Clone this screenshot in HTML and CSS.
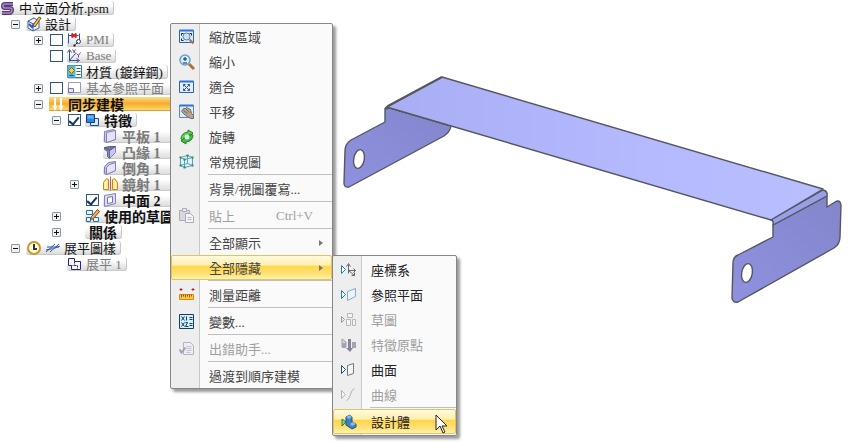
FILE: index.html
```
<!DOCTYPE html>
<html lang="zh-Hant">
<head>
    <meta charset="UTF-8">
    <meta name="viewport" content="width=device-width, initial-scale=1.0">
    <title>中立面分析.psm</title>
    <link rel="stylesheet" href="styles.css">
</head>
<body>
<div class="workspace">

    <!-- Feature tree -->
    <ul class="tree">
        <li class="row root">
            <span class="node"><svg class="icon" viewBox="0 0 16 16"><path d="M13 4H5Q3 4 3 6T5 8H10Q12 8 12 10T10 13H2" fill="none" stroke="#5b3a78" stroke-width="4"/><path d="M13 4H5Q3 4 3 6T5 8H10Q12 8 12 10T10 13H2" fill="none" stroke="#a58cc0" stroke-width="1.5"/></svg>中立面分析.psm</span>
        </li>
        <li class="row level1">
            <span class="slot"><button class="toggle minus" aria-label="設計"></button></span>
            <span class="node"><svg class="icon" viewBox="0 0 16 16"><path d="M2 5l6-3 5 3v7l-6 3-5-3z" fill="#eef3fa" stroke="#35609c"/><path d="M2 5l5 3 6-3M7 8v7" fill="none" stroke="#35609c"/><path d="M3 8l3 3 6-7" fill="none" stroke="#2a55c8" stroke-width="2"/><path d="M7 9l6-8 2 1-6 9z" fill="#f0c060" stroke="#7a4b18"/></svg>設計</span>
        </li>
        <li class="row level2">
            <span class="slot"><button class="toggle plus" aria-label="PMI"></button></span>
            <span class="slot"><input type="checkbox" class="check" aria-label="PMI"></span>
            <span class="node dim"><svg class="icon" viewBox="0.5 0.5 16 16"><path d="M2 2v10M2 4h10M13 2v8" fill="none" stroke="#2f4fb0"/><path d="M5 2l5 4M10 2L5 6" stroke="#e02020" stroke-width="2"/><circle cx="12" cy="10" r="2" fill="#fff" stroke="#26348c"/><path d="M7 13h2v2H7z" fill="#111"/><path d="M9 13l2-2" stroke="#111"/></svg>PMI</span>
        </li>
        <li class="row level2">
            <span class="slot"></span>
            <span class="slot"><input type="checkbox" class="check" aria-label="Base"></span>
            <span class="node dim"><svg class="icon" viewBox="0.5 0.5 16 16"><path d="M3 14V3M1 5l2-3 2 3M3 13h9M10 11l3 2-3 2M3 13l6-7" fill="none" stroke="#2f4f94"/><path d="M6 2l3 4M9 2L7 5M10 6l2 2 2-3M12 8v2" fill="none" stroke="#8b3a9c"/></svg>Base</span>
        </li>
        <li class="row level2">
            <span class="slot"></span>
            <span class="slot"></span>
            <span class="node"><svg class="icon" viewBox="0.5 0.5 16 16"><path d="M1 2h14v12H1z" fill="#fff" stroke="#2a7db0"/><path d="M1 2h8v12H1z" fill="#59b6dc"/><path d="M2 7l3-3 3 3-3 3z" fill="#f5d33d" stroke="#8a6a10"/><path d="M10 5h4M10 8h4M10 11h4" stroke="#2a5a80"/><path d="M3 12h4" stroke="#145888"/></svg>材質 (鍍鋅鋼)</span>
        </li>
        <li class="row level2">
            <span class="slot"><button class="toggle plus" aria-label="基本參照平面"></button></span>
            <span class="slot"><input type="checkbox" class="check" aria-label="基本參照平面"></span>
            <span class="node dim wide"><svg class="icon" viewBox="0.5 0.5 16 16"><path d="M2 3h12v10H2z" fill="#fff" stroke="#9a9ac8"/><path d="M2 9h5v4H2z" fill="#e2e2f5" stroke="#7070b0"/></svg>基本參照平面</span>
        </li>
        <li class="row level2">
            <span class="slot"><button class="toggle minus" aria-label="同步建模"></button></span>
            <span class="node strong active wide"><svg class="icon" viewBox="0 0 16 16"><path d="M6 2v9M12 2v9" stroke="#fff" stroke-width="2"/><path d="M3 9l3 2 3-2-3 6zM9 9l3 2 3-2-3 6z" fill="#fff"/></svg>同步建模</span>
        </li>
        <li class="row level3">
            <span class="slot"><button class="toggle minus" aria-label="特徵"></button></span>
            <span class="slot"><input type="checkbox" class="check" aria-label="特徵" checked></span>
            <span class="node strong"><svg class="icon" viewBox="0.5 0.5 16 16"><path d="M6 7h8v7H6z" fill="#d4ecfa" stroke="#24478c"/><path d="M2 3h8v8H2z" fill="#2f86e0" stroke="#123f96"/><path d="M3 4h6v3H3z" fill="#69b5f4"/></svg>特徵</span>
        </li>
        <li class="row level4">
            <span class="slot"></span>
            <span class="slot"></span>
            <span class="node strong dim wide"><svg class="icon" viewBox="0.5 0.5 16 16"><path d="M2 4l9-2 2 1v9l-9 3-2-1z" fill="#cbc8ee" stroke="#8480bd"/><path d="M4 5l9-2v9l-9 3z" fill="#e5e3fa" stroke="#8480bd"/></svg>平板 1</span>
        </li>
        <li class="row level4">
            <span class="slot"></span>
            <span class="slot"></span>
            <span class="node strong dim wide"><svg class="icon" viewBox="0.5 0.5 16 16"><path d="M7 7l6-4v6l-6 6z" fill="#c9c6ef" stroke="#8480bd"/><path d="M2 4l5 3v8l-2-2V8L2 6z" fill="#8a87bd" stroke="#66638f"/><path d="M2 4l5-1 6 0-6 4z" fill="#77749f" stroke="#5c5a84"/></svg>凸緣 1</span>
        </li>
        <li class="row level4">
            <span class="slot"></span>
            <span class="slot"></span>
            <span class="node strong dim wide"><svg class="icon" viewBox="0.5 0.5 16 16"><path d="M2 7l4-4 7-1v9l-9 4-2-1z" fill="#c3c0e8" stroke="#8480bd"/><path d="M4 8l3-3 6-2v8l-9 4z" fill="#e5e3fa" stroke="#8480bd"/></svg>倒角 1</span>
        </li>
        <li class="row level4">
            <span class="slot"><button class="toggle plus" aria-label="鏡射 1"></button></span>
            <span class="slot"></span>
            <span class="node strong dim wide"><svg class="icon" viewBox="0.5 0.5 16 16"><path d="M1 14V7l3-4 2 1v10zM15 14V7l-3-4-2 1v10z" fill="#ffe992" stroke="#bd8d17"/><path d="M8 1v14" stroke="#e0506a"/><path d="M3 13V7M13 13V7" stroke="#fffbd6"/></svg>鏡射 1</span>
        </li>
        <li class="row level4">
            <span class="slot"></span>
            <span class="slot"><input type="checkbox" class="check" aria-label="中面 2" checked></span>
            <span class="node strong wide"><svg class="icon" viewBox="0.5 0.5 16 16"><path d="M2 4l11-2v10L2 15z" fill="#dedcf5" stroke="#8480bd"/><path d="M5 6l5-1v6l-5 1z" fill="#fff" stroke="#7672b5"/></svg>中面 2</span>
        </li>
        <li class="row level3">
            <span class="slot"><button class="toggle plus" aria-label="使用的草圖"></button></span>
            <span class="slot"></span>
            <span class="node strong wide"><svg class="icon" viewBox="0.5 0.5 16 16"><path d="M2 3h6v4H2zM2 10h4v4H2zM9 10h5v4H9z" fill="#e8f5fd" stroke="#1a72b0"/><path d="M7 9l6-7 2 2-6 7-3 1z" fill="#f3b55a" stroke="#8a3b1a"/></svg>使用的草圖</span>
        </li>
        <li class="row level3">
            <span class="slot"><button class="toggle plus" aria-label="關係"></button></span>
            <span class="slot"></span>
            <span class="node strong plain">關係</span>
        </li>
        <li class="row level1">
            <span class="slot"><button class="toggle minus" aria-label="展平圖樣"></button></span>
            <span class="node"><svg class="icon" viewBox="0 0 16 16"><circle cx="8" cy="8" r="6" fill="#fffce8" stroke="#c89a28" stroke-width="2"/><path d="M8 4v5h3" fill="none" stroke="#3a3420" stroke-width="2"/></svg><svg class="icon" viewBox="0 0 16 16"><path d="M1 12L10 4M5 12l9-8M1 10l5-1 4-1 5-2M2 7h12" fill="none" stroke="#2e56a8"/><path d="M6 8l4-1-3 3z" fill="#6d9be0"/></svg>展平圖樣</span>
        </li>
        <li class="row level2">
            <span class="slot"></span>
            <span class="slot"></span>
            <span class="node dim"><svg class="icon" viewBox="0.5 0.5 16 16"><path d="M2 3h6v3h6v8H5v-4H2z" fill="#f7f7ff" stroke="#25258a"/><path d="M8 6v4H5M8 10h3v4" fill="none" stroke="#25258a" stroke-dasharray="2 1"/></svg>展平 1</span>
        </li>
    </ul>

    <!-- Model view -->
    <svg class="model" viewBox="330 0 520 442" role="img" aria-label="設計體">
        <defs>
            <linearGradient id="plate" x1="0" x2="1">
                <stop offset="0" stop-color="#a9adf4"/>
                <stop offset="0.6" stop-color="#b5baff"/>
                <stop offset="1" stop-color="#b9beff"/>
            </linearGradient>
            <linearGradient id="flange" x1="1" x2="0" y2="1">
                <stop offset="0" stop-color="#8386cb"/>
                <stop offset="1" stop-color="#8f91e0"/>
            </linearGradient>
        </defs>
        <g stroke="#55575e" stroke-width="1.4" stroke-linejoin="round">
            <path d="M390 108L385 109V122L351 140Q345 144 345 151L344 183Q344 188 349 187L444 136Q450 132 451 126Z" fill="url(#flange)"/>
            <path d="M387 107L442 77L823 189L771 220L390 108Z" fill="url(#plate)"/>
            <path d="M385 109L388 106L442 77" fill="none" stroke-width="2"/>
            <path d="M773 225L827 196V207L835 202Q840 199 841 205L840 237Q840 244 834 248L738 302Q733 303 732 298L733 263Q733 257 738 255L773 237Z" fill="url(#flange)"/>
            <path d="M771 220L823 190Q828 191 827 196L773 225Q774 221 771 220Z" fill="#9a9de8"/>
            <ellipse cx="359" cy="159" rx="5.3" ry="9.5" transform="rotate(10 359 159)" fill="#fff"/>
            <ellipse cx="747" cy="273" rx="5.3" ry="9.5" transform="rotate(10 747 273)" fill="#fff"/>
        </g>
    </svg>

    <!-- Context menu -->
    <ul class="menu context">
        <li><button class="item"><svg class="icon" viewBox="0.5 0.5 16 16"><path d="M1 2h14v12H1z" fill="#dcecfa" stroke="#2a62b4"/><path d="M1 2h14" stroke="#2d74d4" stroke-width="2"/><path d="M3 7V5h2M11 5h2v2M3 10v2h2" fill="none" stroke="#222"/><circle cx="8" cy="8" r="3.5" fill="#c2e4fa" stroke="#5c7ea8"/><path d="M11 11l4 4" stroke="#b0703e" stroke-width="2"/></svg>縮放區域</button></li>
        <li><button class="item"><svg class="icon" viewBox="0 0 16 16"><circle cx="6" cy="6" r="5" fill="#d0effc" stroke="#6d9ed0" stroke-width="1.5"/><path d="M4 5h4M6 3v4M4 9h4" stroke="#223"/><path d="M10 10l5 5" stroke="#b0703e" stroke-width="3"/></svg>縮小</button></li>
        <li><button class="item"><svg class="icon" viewBox="0.5 0.5 16 16"><path d="M1 3h14v11H1z" fill="#e4effb" stroke="#2a62b4"/><path d="M1 3h14" stroke="#2d74d4" stroke-width="2"/><path d="M5 6l6 6M11 6l-6 6" stroke="#2857c0"/><path d="M5 8V6h2M9 6h2v2M11 10v2H9M7 12H5v-2" fill="none" stroke="#2857c0"/></svg>適合</button></li>
        <li><button class="item"><svg class="icon" viewBox="0.5 0.5 16 16"><path d="M1 2h14v12H1z" fill="#dcecfa" stroke="#5c86bc"/><path d="M1 2h14" stroke="#2d74d4" stroke-width="2"/><path d="M3 8l2-3 2 0 1-1 2 1 2 1 1 4 2 2v3h-3l-3-2-2-1z" fill="#b3a596" stroke="#76695e"/><path d="M5 7l4 3M7 5l4 4" stroke="#76695e"/></svg>平移</button></li>
        <li><button class="item"><svg class="icon" viewBox="0 0 16 16"><path d="M2 10Q2 4 9 3V1l5 3-4 4V6Q5 7 5 11z" fill="#62d044" stroke="#268526"/><path d="M14 6q0 6-7 7v2l-5-3 4-4v2q5-1 5-5z" fill="#46b838" stroke="#268526"/><circle cx="8" cy="8" r="2.5" fill="#d5f0fc"/></svg>旋轉</button></li>
        <li><button class="item"><svg class="icon" viewBox="0.5 0.5 16 16"><path d="M2 4l4 2v8l-4-2zM6 6l8-2v8l-8 2M2 4l7-2 5 2M9 2v8M2 12l7-2 5 2" fill="#d5f4fa" fill-opacity=".6" stroke="#5aa0c4"/><path d="M1 3h2v2H1zM5 5h2v2H5zM13 3h2v2h-2zM8 1h2v2H8zM1 11h2v2H1zM5 13h2v2H5zM13 11h2v2h-2z" fill="#299044"/></svg>常規視圖</button></li>
        <li class="line"></li>
        <li><button class="item">背景/視圖覆寫...</button></li>
        <li class="line"></li>
        <li><button class="item" disabled><svg class="icon" viewBox="0.5 0.5 16 16"><path d="M1 3h10v10H1z" fill="#d8d8df" stroke="#aaaab8"/><path d="M4 1h4v3H4z" fill="#eee" stroke="#aaaab8"/><path d="M7 6h5l3 3v6H7z" fill="#f5f5f9" stroke="#aaaab8"/><path d="M9 10h4M9 12h4" stroke="#b7b7c4"/></svg>貼上<kbd class="shortcut">Ctrl+V</kbd></button></li>
        <li class="line"></li>
        <li><button class="item more">全部顯示</button></li>
        <li class="parent"><button class="item more selected">全部隱藏</button>
            <ul class="menu submenu">
                <li><button class="item"><svg class="icon" viewBox="0.5 0.5 16 16"><path d="M1 4l4 4-4 4z" fill="#fff" stroke="#1b7fc0"/><path d="M8 12V3M6 5l2-3 2 3M8 9h7M13 7l2 2-2 2M8 9l6 5M11 14h3v-3" fill="none" stroke="#666"/></svg>座標系</button></li>
                <li><button class="item"><svg class="icon" viewBox="0.5 0.5 16 16"><path d="M1 4l4 4-4 4z" fill="#fff" stroke="#1b7fc0"/><path d="M7 5l8-3v8l-8 4z" fill="#eaf3fa" stroke="#8babc5"/></svg>參照平面</button></li>
                <li><button class="item" disabled><svg class="icon" viewBox="0.5 0.5 16 16"><path d="M1 5l3 3-3 3z" fill="#eee" stroke="#999"/><path d="M7 2h5v4H7zM6 8h4v6H6zM12 8h3v6h-3z" fill="#f5f5f7" stroke="#b5b5bf"/></svg>草圖</button></li>
                <li><button class="item" disabled><svg class="icon" viewBox="0 0 16 16"><path d="M1 2l4 3v5H1z" fill="#d6d6e0" stroke="#9999ab"/><path d="M1 6h4v5H1zM11 5h4v6h-4z" fill="#a3a3b1"/><path d="M7 2h3v9h2l-3 4-4-4h2z" fill="#85859a"/></svg>特徵原點</button></li>
                <li><button class="item"><svg class="icon" viewBox="0.5 0.5 16 16"><path d="M1 4l4 4-4 4z" fill="#fff" stroke="#234c7c"/><path d="M7 4l6-2v10l-6 2z" fill="#f6f6f6" stroke="#777"/></svg>曲面</button></li>
                <li><button class="item" disabled><svg class="icon" viewBox="0.5 0.5 16 16"><path d="M1 4l4 4-4 4z" fill="#f5f5f5" stroke="#b0b0bb"/><path d="M6 14q3-1 4-6t4-6" fill="none" stroke="#b0b0bb"/></svg>曲線</button></li>
                <li class="line"></li>
                <li><button class="item selected"><svg class="icon" viewBox="0 0 16 16"><path d="M1 5l4 3-4 4z" fill="#8ad08a" stroke="#287d43"/><path d="M5 3l4-2 2 2v5l4 2v3l-4 2-6-4z" fill="#3f80c0" stroke="#245182"/><path d="M5 3l4-2 2 2-3 2zM9 10l3-2 3 2-4 2z" fill="#87bce8"/></svg>設計體</button>
                    <svg class="pointer" viewBox="0 0 13 20"><path d="M1 1v15l4-4 3 7 2-1-3-6h5z" fill="#fff" stroke="#222"/></svg>
                </li>
            </ul>
        </li>
        <li class="line"></li>
        <li><button class="item"><svg class="icon" viewBox="0.5 0.5 16 16"><path d="M1 8h14v5H1z" fill="#ffc848" stroke="#d58a18"/><path d="M3 8v3M5 8v2M7 8v3M9 8v2M11 8v3M13 8v2" stroke="#9a5b10"/><path d="M1 3h3M2.500 1.500v3M13 3h3M14.500 1.500v3" stroke="#cc2020"/></svg>測量距離</button></li>
        <li class="line"></li>
        <li><button class="item"><svg class="icon" viewBox="0.5 0.5 16 16"><path d="M1 1h14v14H1z" fill="#d0effa" stroke="#163d62"/><path d="M3 3l3 4M6 3L3 7M3 9l3 4M6 9l-3 4M8 3v4M7 9h2l-2 4h3M11 4h3M11 6h3M11 10h3M11 12h3" fill="none" stroke="#143a5c"/></svg>變數...</button></li>
        <li class="line"></li>
        <li><button class="item" disabled><svg class="icon" viewBox="0.5 0.5 16 16"><path d="M5 2h7l3 3v9H5z" fill="#ededf3" stroke="#b3b3c8"/><path d="M8 6h5M8 8h5M8 10h5M8 12h4" stroke="#c4c4d2"/><path d="M1 9l2 3 4-5" fill="none" stroke="#a1a1b4" stroke-width="2"/></svg>出錯助手...</button></li>
        <li class="line"></li>
        <li><button class="item">過渡到順序建模</button></li>
    </ul>
</div>
</body>
</html>
```

FILE: styles.css
```
* {
    box-sizing: border-box;
}
body {
    margin: 0;
    background-color: #fff;
    color: #111;
    font-family: "Liberation Serif", "Noto Sans CJK TC", serif;
    font-size: 13px;
}
ul {
    list-style: none;
    margin: 0;
    padding: 0;
}
button {
    font: inherit;
    padding: 0;
}
.icon {
    width: 16px;
    height: 16px;
    flex: none;
}
.workspace {
    position: relative;
    display: grid;
    grid-template-columns: 330px 1fr;
    align-items: start;
}
.model {
    display: block;
    width: 100%;
}

/* tree */
.row {
    display: flex;
    align-items: center;
    height: 16px;
    white-space: nowrap;
}
.level1 {
    padding-left: 6px;
}
.level2 {
    padding-left: 29px;
}
.level3 {
    padding-left: 47px;
}
.level4 {
    padding-left: 65px;
}
.slot {
    display: flex;
    align-items: center;
    justify-content: center;
    width: 18px;
    flex: none;
}
.toggle {
    width: 9px;
    height: 9px;
    border: 1px solid #8597ab;
    border-radius: 1px;
    background: linear-gradient(#111, #111) center / 5px 1px no-repeat, #f3f2ee;
}
.toggle.plus {
    background: linear-gradient(#111, #111) center / 5px 1px no-repeat, linear-gradient(#111, #111) center / 1px 5px no-repeat, #f3f2ee;
}
.check {
    appearance: none;
    width: 13px;
    height: 12px;
    margin: 0;
    border: 1px solid #2d5880;
    background-color: #fff;
    display: flex;
    justify-content: center;
}
.check:checked::before {
    content: "";
    width: 4px;
    height: 8px;
    border: solid #16365c;
    border-width: 0 2px 2px 0;
    transform: rotate(40deg);
}
.node {
    display: flex;
    align-items: center;
    gap: 3px;
    height: 14px;
    margin-left: 2px;
    padding-right: 4px;
    border-right: 1px solid #c9c9c9;
    border-bottom: 1px solid #c9c9c9;
    border-radius: 3px;
    background: linear-gradient(#fff 20%, #dcdcdc);
}
.root .node {
    margin-left: 0;
}
.dim {
    color: #7b7b7b;
}
.strong {
    font-size: 14px;
    font-weight: bold;
}
.plain {
    padding-left: 4px;
}
.wide {
    flex: 1;
}
.active {
    border-color: #d9a038;
    border-radius: 0;
    background: linear-gradient(#fcdc8c, #f6ac2c 50%, #fcd66c);
}

/* menus */
.menu {
    position: absolute;
    border: 1px solid #868686;
    border-radius: 2px;
    background: linear-gradient(90deg, #eee 28px, #c9c9c9 28px, #c9c9c9 29px, #fafafa 29px);
    box-shadow: 3px 3px 3px rgba(0, 0, 0, 0.4);
}
.context {
    left: 170px;
    top: 23px;
    width: 163px;
}
.parent {
    position: relative;
}
.submenu {
    left: 100%;
    top: 0;
    width: 125px;
    padding: 1px 0;
    z-index: 1;
}
.item {
    display: flex;
    align-items: center;
    gap: 14px;
    width: 100%;
    height: 25px;
    padding: 0 8px 0 7px;
    border: 1px solid transparent;
    border-radius: 2px;
    background: none;
    color: #444;
    text-align: left;
    white-space: nowrap;
}
.item:not(:has(.icon)) {
    padding-left: 37px;
}
.submenu .item {
    color: #222;
}
.item:disabled,
.submenu .item:disabled {
    color: #a0a0a0;
}
.shortcut {
    margin: 0 10px 0 auto;
    font: inherit;
}
.more {
    justify-content: space-between;
}
.more::after {
    content: "";
    border: solid transparent;
    border-width: 3px 0 3px 4px;
    border-left-color: #777;
}
.item.selected {
    border-color: #e2c45c;
    background: linear-gradient(#fffbe0, #ffeeac 40%, #ffd54c 45%, #ffe27a 80%, #fff2b4);
}
.line {
    height: 2px;
    margin-left: 37px;
    border-top: 1px solid #c0c0c0;
}
.pointer {
    position: absolute;
    right: 8px;
    bottom: 1px;
    width: 13px;
    height: 20px;
}
```
